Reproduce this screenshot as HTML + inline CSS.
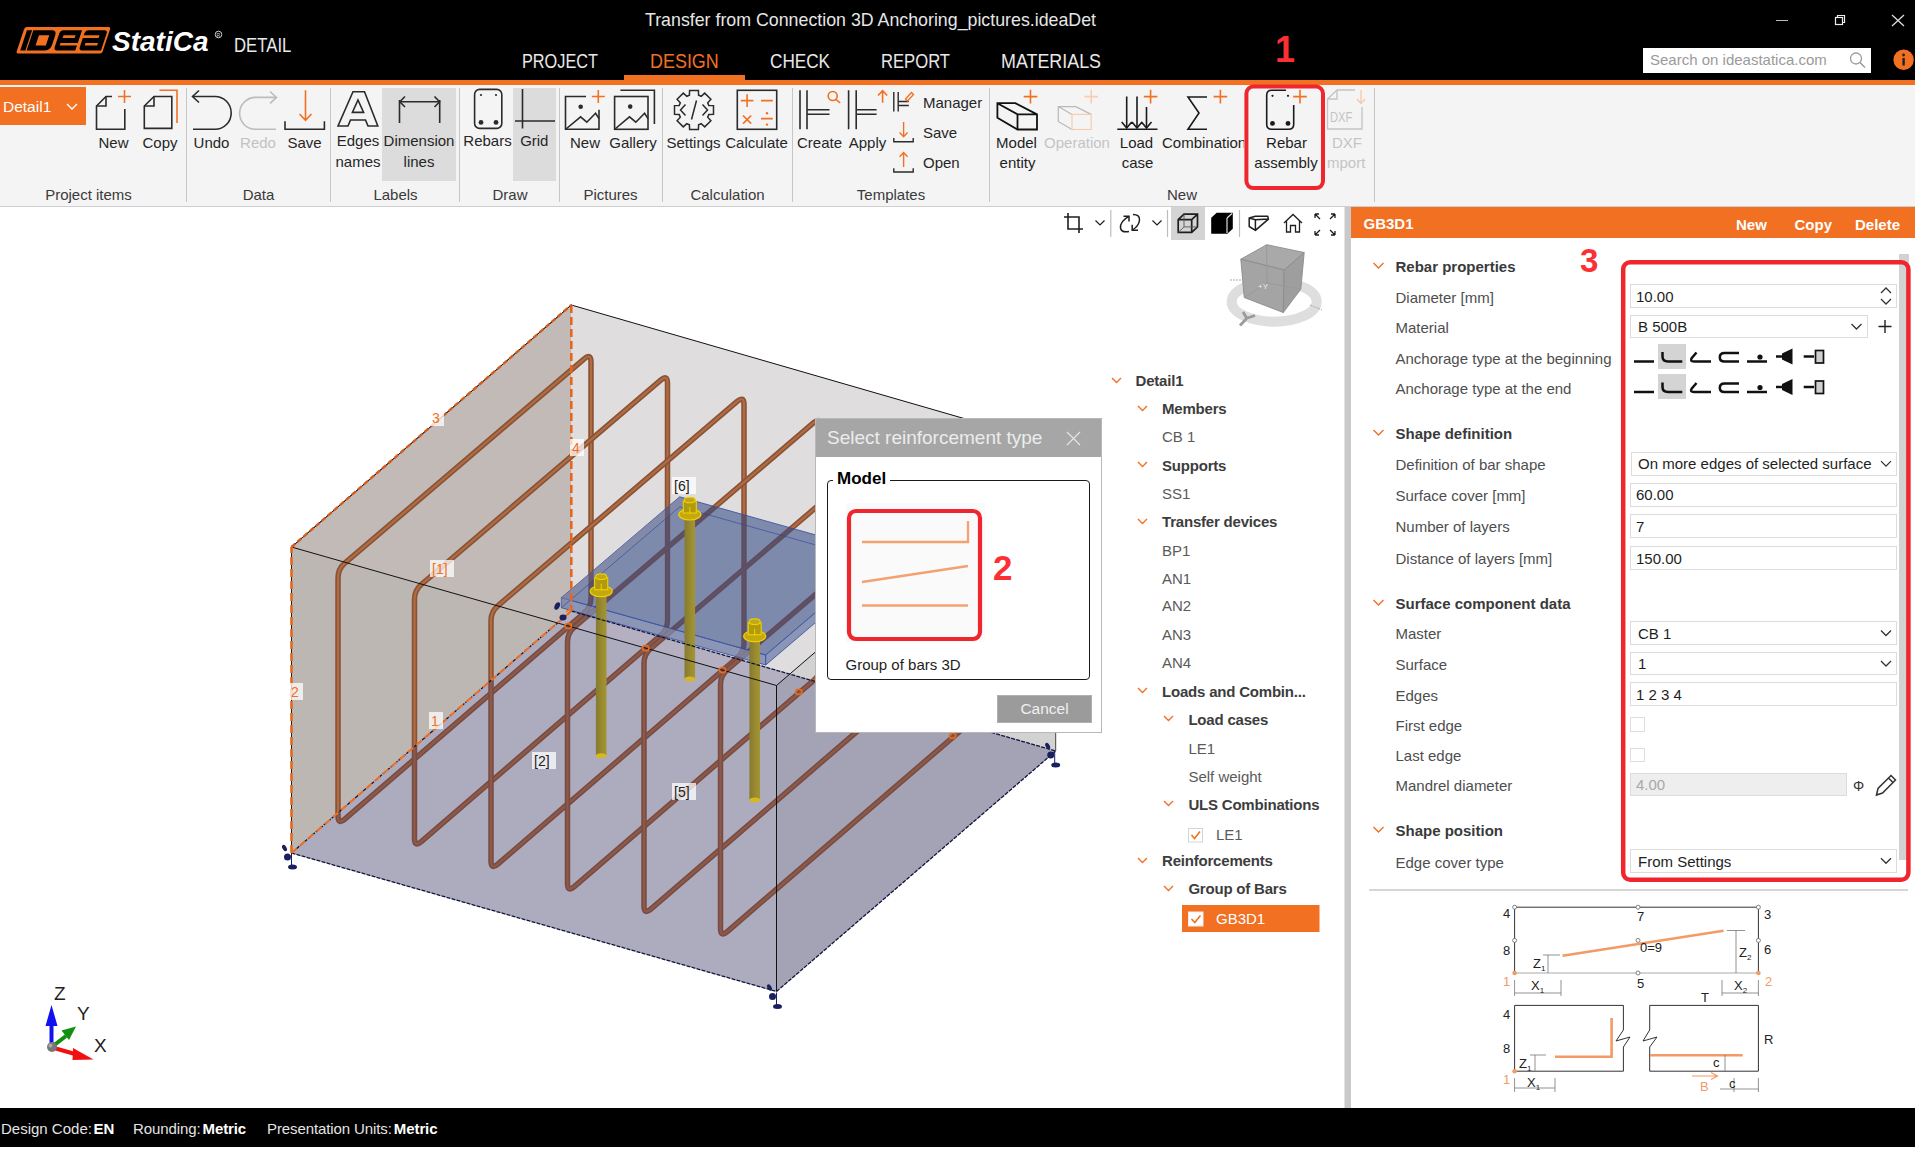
<!DOCTYPE html>
<html><head><meta charset="utf-8">
<style>
*{box-sizing:border-box}
body{margin:0;width:1920px;height:1150px;background:#fff;position:relative;overflow:hidden;font-family:"Liberation Sans",sans-serif;color:#222}
.a{position:absolute;white-space:nowrap}
#hdr{position:absolute;left:0;top:0;width:1915px;height:80px;background:#000}
#oline{position:absolute;left:0;top:80px;width:1915px;height:5px;background:#f27022}
#tb{position:absolute;left:0;top:85px;width:1915px;height:122px;background:#f4f4f4;border-bottom:1px solid #cfcfcf}
#vp{position:absolute;left:0;top:207px;width:1344px;height:901px;background:#fff}
#split{position:absolute;left:1344px;top:207px;width:7px;height:901px;background:#c9c9c9;border-left:1px solid #e4e4e4}
#rp{position:absolute;left:1351px;top:207px;width:564px;height:901px;background:#fff}
#status{position:absolute;left:0;top:1108px;width:1915px;height:39px;background:#000;color:#e6e6e6;font-size:15px}
.tab{position:absolute;top:48px;font-size:20px;color:#e8e8e8;transform-origin:0 0}
.tl{position:absolute;font-size:15px;color:#262626;white-space:nowrap}
.gl{position:absolute;top:104px;font-size:15px;color:#333;white-space:nowrap}
.sep{position:absolute;top:2px;width:1px;height:116px;background:#c8c8c8}
.lbl{position:absolute;left:44px;font-size:15px;color:#4a4a4a;white-space:nowrap}
.sec{position:absolute;left:44px;font-size:15px;font-weight:bold;color:#3c3c3c;white-space:nowrap}
.chev{position:absolute;left:22px;width:11px;height:7px}
.inp{position:absolute;left:279px;width:268px;height:25px;border:1px solid #dcdcdc;background:#fff;font-size:15px;color:#1e1e1e;padding-left:6px;line-height:23px;white-space:nowrap}
.tr{position:absolute;font-size:15px;color:#5a5a5a;white-space:nowrap}
.trb{position:absolute;font-size:15px;font-weight:bold;color:#3d3d3d;white-space:nowrap;letter-spacing:-0.2px}
</style></head>
<body>
<div id="hdr">
  <svg class="a" style="left:0;top:0" width="300" height="80">
    <g transform="translate(16,27) translate(8.8,0) skewX(-18.4)">
      <rect x="0" y="0" width="86" height="26.5" rx="2" fill="#f27022"/>
      <rect x="3.2" y="3.2" width="5.2" height="20.2" fill="#000"/>
      <path d="M9.6,3.2 H28 Q33.2,3.2 33.2,8.5 V18 Q33.2,23.4 28,23.4 H9.6 Z M16.9,8.2 V18.5 H27.2 V8.2 Z" fill="#000" fill-rule="evenodd"/>
      <path d="M40,3.2 H58.3 V23.4 H40 Q36.6,23.4 36.6,20 V6.6 Q36.6,3.2 40,3.2 Z M41.5,8.2 V11.1 H53.5 V8.2 Z" fill="#000" fill-rule="evenodd"/>
      <rect x="41" y="15.9" width="19" height="2.6" fill="#f27022"/>
      <path d="M65,3.2 H80.6 Q84,3.2 84,6.6 V23.4 H65 Q61.7,23.4 61.7,20 V6.6 Q61.7,3.2 65,3.2 Z M66,15.9 V18.5 H78.5 V15.9 Z" fill="#000" fill-rule="evenodd"/>
      <rect x="59" y="8.2" width="18.5" height="2.9" fill="#f27022"/>
    </g>
    <text x="112" y="51" font-family="Liberation Sans" font-weight="bold" font-style="italic" font-size="28" fill="#fff">StatiCa</text>
    <circle cx="218.5" cy="34.5" r="3.3" fill="none" stroke="#ddd" stroke-width="0.9"/>
    <text x="216.6" y="36.5" font-family="Liberation Sans" font-size="5" fill="#ddd">R</text>
    <text x="234" y="52.5" font-family="Liberation Sans" font-size="19.5" fill="#e8e8e8" transform="translate(234,0) scale(0.86,1) translate(-234,0)">DETAIL</text>
  </svg>
  <div class="a" style="left:645px;top:9.5px;font-size:17.8px;color:#e6e6e6">Transfer from Connection 3D Anchoring_pictures.ideaDet</div>
  <div class="tab" style="left:521.5px;top:49.6px;font-size:19.5px;transform:scaleX(0.835)">PROJECT</div>
  <div class="tab" style="left:649.5px;top:49.6px;font-size:19.5px;transform:scaleX(0.92);color:#f27022">DESIGN</div>
  <div class="tab" style="left:770px;top:49.6px;font-size:19.5px;transform:scaleX(0.88)">CHECK</div>
  <div class="tab" style="left:881px;top:49.6px;font-size:19.5px;transform:scaleX(0.853)">REPORT</div>
  <div class="tab" style="left:1001px;top:49.6px;font-size:19.5px;transform:scaleX(0.917)">MATERIALS</div>
  <div class="a" style="left:624px;top:75px;width:121px;height:5px;background:#f27022"></div>
  <div class="a" style="left:1275px;top:32.8px;font-size:36px;line-height:34px;font-weight:bold;color:#fa3034">1</div>
  <svg class="a" style="left:1760px;top:0" width="155" height="80">
    <line x1="16" y1="20.5" x2="28" y2="20.5" stroke="#bbb" stroke-width="1"/>
    <rect x="75.5" y="17.5" width="7" height="7" fill="none" stroke="#eee" stroke-width="1.2"/>
    <path d="M77.5,17.5 V15.5 H84.5 V22.5 H82.5" fill="none" stroke="#eee" stroke-width="1.2"/>
    <path d="M132,15 L144,26 M144,15 L132,26" stroke="#ddd" stroke-width="1.3"/>
  </svg>
  <div class="a" style="left:1643px;top:47.5px;width:228px;height:25.5px;background:#fff"></div>
  <div class="a" style="left:1650px;top:51px;font-size:15px;color:#9a9a9a">Search on ideastatica.com</div>
  <svg class="a" style="left:1845px;top:50px" width="25" height="22">
    <circle cx="11" cy="8.5" r="5.5" fill="none" stroke="#9a9a9a" stroke-width="1.3"/>
    <line x1="15" y1="12.5" x2="20" y2="17.5" stroke="#9a9a9a" stroke-width="1.5"/>
  </svg>
  <svg class="a" style="left:1893px;top:49px" width="22" height="22">
    <circle cx="10.6" cy="10.8" r="10.2" fill="#f27022"/>
    <rect x="9.4" y="9" width="2.4" height="7.5" fill="#222"/>
    <circle cx="10.6" cy="6" r="1.4" fill="#222"/>
  </svg>
</div>
<div id="oline"></div>
<div id="tb"></div>
<div class="a" style="left:382px;top:88px;width:74px;height:93px;background:#dcdcdc"></div>
<div class="a" style="left:513px;top:88px;width:43px;height:93px;background:#dcdcdc"></div>
<div class="a" style="left:0;top:87px;width:85.5px;height:38px;background:#f27022"></div>
<div class="a" style="left:3px;top:98px;font-size:15.5px;color:#fff">Detail1</div>
<svg class="a" style="left:0;top:0" width="1400" height="210">
 <g fill="none" stroke="#2b2b2b" stroke-width="1.6" stroke-linejoin="miter">
  <path d="M67,104 L72,109 L77,104" stroke="#fff" stroke-width="1.3"/>
  <!-- separators -->
  <g stroke="#c6c6c6" stroke-width="1">
   <line x1="186.5" y1="88" x2="186.5" y2="202"/><line x1="330.5" y1="88" x2="330.5" y2="202"/>
   <line x1="459.5" y1="88" x2="459.5" y2="202"/><line x1="559.5" y1="88" x2="559.5" y2="202"/>
   <line x1="662.5" y1="88" x2="662.5" y2="202"/><line x1="792.5" y1="88" x2="792.5" y2="202"/>
   <line x1="989.5" y1="88" x2="989.5" y2="202"/><line x1="1374.5" y1="88" x2="1374.5" y2="202"/>
  </g>
  <!-- New -->
  <path d="M112,96.5 H106 L96.5,106 V129.3 H124.8 V109"/><path d="M106,96.5 V106 H96.5"/>
  <path d="M124.5,90 V103 M118,96.5 H131" stroke="#f27022"/>
  <!-- Copy -->
  <path d="M171.8,96.5 H154 L144.3,106 V128.4 H171.8 Z"/><path d="M154,96.5 V106 H144.3"/>
  <path d="M159.4,90.3 H177 V123" stroke="#f27022"/>
  <!-- Undo -->
  <path d="M193,96.5 H215 A16.2,16.4 0 0 1 215,129.3 H193"/><path d="M199,90.5 L192.5,96.5 L199,102.5"/>
  <!-- Redo -->
  <g stroke="#bcbcbc"><path d="M276,97.4 H254.5 A16.2,16 0 0 0 254.5,129.3 H276"/><path d="M270,91.5 L276.5,97.4 L270,103.3"/></g>
  <!-- Save -->
  <path d="M305.5,90.3 V120 M299.5,114 L305.5,120.3 L311.5,114" stroke="#f27022"/>
  <path d="M285,121.3 V129.3 H324.4 V121.3"/>
  <!-- Edges names A -->
  <path d="M353,91.7 H364.5 L377.8,126 H368 L365.5,120 H350.5 L348,126 H338 Z"/><path d="M358,100 L363.6,112.4 H352.4 Z"/>
  <!-- Dimension lines -->
  <path d="M399.5,100 V123 M439.7,100 V123 M400,101.8 H439"/><path d="M405,96.5 L399.8,101.8 L405,107 M434.5,96.5 L439.6,101.8 L434.5,107"/>
  <!-- Rebars -->
  <rect x="474.6" y="89.4" width="27.2" height="39" rx="5"/>
  <g fill="#2b2b2b" stroke="none"><circle cx="481" cy="95" r="1.1"/><circle cx="496" cy="95" r="1.1"/><circle cx="481" cy="122.4" r="2.4"/><circle cx="496" cy="122.4" r="2.4"/></g>
  <!-- Grid -->
  <path d="M522.5,89 V128.5 M515,121 H555"/>
  <!-- Pictures New -->
  <path d="M586,96.5 H565.5 V129.3 H599 V109.8"/><circle cx="580.7" cy="106.8" r="2.3" fill="#2b2b2b" stroke="none"/>
  <path d="M566,129 L580.6,116.9 L586.8,122.2 L595.6,113.3 L599,118.6"/>
  <path d="M598.3,90 V103 M591.8,96.5 H604.8" stroke="#f27022"/>
  <!-- Gallery -->
  <rect x="614.6" y="96.5" width="33.4" height="32.8"/><path d="M620.4,90.3 H654.4 V124"/><circle cx="630.2" cy="106.6" r="2.3" fill="#2b2b2b" stroke="none"/>
  <path d="M615,129 L629.5,116.9 L635.8,122.2 L644.6,113.3 L648,118.6"/>
  <!-- Settings gear -->
  <path d="M708.8,105.4 L713.5,105.6 L713.5,114.4 L708.8,114.6 L707.7,117.2 L710.9,120.7 L704.7,126.9 L701.2,123.7 L698.6,124.8 L698.4,129.5 L689.6,129.5 L689.4,124.8 L686.8,123.7 L683.3,126.9 L677.1,120.7 L680.3,117.2 L679.2,114.6 L674.5,114.4 L674.5,105.6 L679.2,105.4 L680.3,102.8 L677.1,99.3 L683.3,93.1 L686.8,96.3 L689.4,95.2 L689.6,90.5 L698.4,90.5 L698.6,95.2 L701.2,96.3 L704.7,93.1 L710.9,99.3 L707.7,102.8Z" stroke-width="1.5"/>
  <path d="M685.5,104.5 L680.5,110 L685.5,115.5 M702.5,104.5 L707.5,110 L702.5,115.5 M696.5,100.5 L691.5,119.5" stroke-width="1.5"/>
  <!-- Calculate -->
  <rect x="737.3" y="90.3" width="39.4" height="39"/>
  <g stroke="#f27022"><path d="M747.1,94.3 V107 M740.8,100.6 H753.4 M761,100.6 H772.8 M743,115.5 L751.2,123.6 M751.2,115.5 L743,123.6 M761,118.6 H772.8"/></g>
  <g fill="#f27022" stroke="none"><circle cx="767" cy="113.3" r="1.2"/><circle cx="767" cy="124.6" r="1.2"/></g>
  <!-- Create -->
  <path d="M800,90.3 V129.3 M807,90.3 V129.3 M807,109.8 H829.5 M807,114.2 H829.5"/>
  <g stroke="#f27022"><circle cx="832.7" cy="96" r="4.5"/><path d="M836,99.3 L840.1,103"/></g>
  <!-- Apply -->
  <path d="M848.6,90.3 V129.3 M856.2,90.3 V129.3 M856.2,109.8 H876.6 M856.2,114.2 H876.6"/>
  <path d="M882.6,102.7 V91 M878,95.5 L882.6,90.6 L887.2,95.5" stroke="#f27022"/>
  <!-- Manager small -->
  <path d="M893.8,92 V111.6 M898.2,92 V111.6 M898.2,101.5 H908.8 M898.2,105.5 H908.8" stroke-width="1.4"/>
  <path d="M905.5,99 L911.5,92.5 L913.5,94.5 L907.5,101 Z" stroke="#f27022" stroke-width="1.3"/>
  <!-- Save small -->
  <path d="M903.6,122 V136.5 M899.6,132.5 L903.6,136.8 L907.6,132.5" stroke="#f27022" stroke-width="1.4"/>
  <path d="M893.8,138 V141.7 H913.2 V138" stroke-width="1.4"/>
  <path d="M903.6,167 V152.8 M899.6,156.8 L903.6,152.5 L907.6,156.8" stroke="#f27022" stroke-width="1.4"/>
  <path d="M893.8,168.2 V172 H913.2 V168.2" stroke-width="1.4"/>
  <!-- Model entity -->
  <path d="M997.4,103.2 H1015.3 L1037,114.4 V129.5 H1017.5 L997.4,117.8 Z M997.4,103.2 L1017.5,114.4 H1037 M1017.5,114.4 V129.5" stroke="#111" stroke-width="1.8"/>
  <path d="M1030.5,89.8 V103.4 M1023.7,96.6 H1037.3" stroke="#f27022"/>
  <!-- Operation -->
  <path d="M1072,129.5 L1058.3,121.5 V106.6 H1075.8 L1091.2,114.4 M1058.3,106.6 L1072,114.4" stroke="#b9b9b9" stroke-width="1.2"/>
  <rect x="1072" y="114.4" width="19.2" height="15.1" stroke="#f6cdb0" stroke-width="1.2"/>
  <path d="M1091.2,89.8 V103.4 M1084.4,96.6 H1098" stroke="#f8cdb0"/>
  <!-- Load case -->
  <path d="M1117.3,129.2 H1157.5 M1126.7,96.5 V128 M1137,96.5 V128 M1146.5,107 V128" stroke="#1a1a1a"/>
  <path d="M1121.7,122 L1126.7,128 L1131.7,122 M1132,122 L1137,128 L1142,122 M1141.5,122 L1146.5,128 L1151.5,122" stroke="#1a1a1a"/>
  <path d="M1150.6,89.8 V103.4 M1143.8,96.6 H1157.4" stroke="#f27022"/>
  <!-- Combination -->
  <path d="M1207,97 H1188 L1199,113 L1188,129.2 H1207" stroke="#1a1a1a"/>
  <path d="M1220.4,89.8 V103.4 M1213.6,96.6 H1227.2" stroke="#f27022"/>
  <!-- Rebar assembly -->
  <path d="M1286,90.2 H1271.7 Q1266.7,90.2 1266.7,95.2 V124.2 Q1266.7,129.2 1271.7,129.2 H1288.7 Q1293.7,129.2 1293.7,124.2 V105" stroke="#1a1a1a"/>
  <g fill="#1a1a1a" stroke="none"><circle cx="1272.5" cy="95.8" r="1.1"/><circle cx="1288" cy="95.8" r="1.1"/><circle cx="1272.5" cy="123.4" r="2.4"/><circle cx="1288" cy="123.4" r="2.4"/></g>
  <path d="M1300,89.8 V103.4 M1293.2,96.6 H1306.8" stroke="#f27022"/>
  <!-- DXF -->
  <path d="M1355,90 H1337 L1327.5,99 V129 H1362 V107" stroke="#c4c4c4" stroke-width="1.3"/>
  <path d="M1337,90 V99 H1327.5" stroke="#c4c4c4" stroke-width="1.3"/>
  <path d="M1361,90 V103 M1357,99 L1361,103.5 L1365,99" stroke="#f6c8a8" stroke-width="1.3"/>
  <!-- red box 1 -->
  <rect x="1246.4" y="86.5" width="76.6" height="101.6" rx="7" stroke="#f0262e" stroke-width="4"/>
 </g>
 <text x="1330" y="122" font-family="Liberation Sans" font-size="14" fill="#c4c4c4" transform="translate(1330,0) scale(0.8,1) translate(-1330,0)">DXF</text>
</svg>
<div class="tl" style="left:53.5px;top:134.0px;width:120px;text-align:center;line-height:18px;color:#262626">New</div>
<div class="tl" style="left:100.0px;top:134.0px;width:120px;text-align:center;line-height:18px;color:#262626">Copy</div>
<div class="tl" style="left:151.5px;top:134.0px;width:120px;text-align:center;line-height:18px;color:#262626">Undo</div>
<div class="tl" style="left:198.0px;top:134.0px;width:120px;text-align:center;line-height:18px;color:#c2c2c2">Redo</div>
<div class="tl" style="left:244.5px;top:134.0px;width:120px;text-align:center;line-height:18px;color:#262626">Save</div>
<div class="tl" style="left:298.0px;top:132.4px;width:120px;text-align:center;line-height:18px;color:#262626">Edges</div>
<div class="tl" style="left:298.0px;top:152.8px;width:120px;text-align:center;line-height:18px;color:#262626">names</div>
<div class="tl" style="left:359.0px;top:132.4px;width:120px;text-align:center;line-height:18px;color:#262626">Dimension</div>
<div class="tl" style="left:359.0px;top:152.8px;width:120px;text-align:center;line-height:18px;color:#262626">lines</div>
<div class="tl" style="left:427.5px;top:132.4px;width:120px;text-align:center;line-height:18px;color:#262626">Rebars</div>
<div class="tl" style="left:474.3px;top:132.4px;width:120px;text-align:center;line-height:18px;color:#262626">Grid</div>
<div class="tl" style="left:525.0px;top:134.0px;width:120px;text-align:center;line-height:18px;color:#262626">New</div>
<div class="tl" style="left:573.0px;top:134.0px;width:120px;text-align:center;line-height:18px;color:#262626">Gallery</div>
<div class="tl" style="left:633.5px;top:134.0px;width:120px;text-align:center;line-height:18px;color:#262626">Settings</div>
<div class="tl" style="left:696.5px;top:134.0px;width:120px;text-align:center;line-height:18px;color:#262626">Calculate</div>
<div class="tl" style="left:759.5px;top:134.0px;width:120px;text-align:center;line-height:18px;color:#262626">Create</div>
<div class="tl" style="left:807.5px;top:134.0px;width:120px;text-align:center;line-height:18px;color:#262626">Apply</div>
<div class="tl" style="left:956.5px;top:134.0px;width:120px;text-align:center;line-height:18px;color:#1e1e1e">Model</div>
<div class="tl" style="left:957.5px;top:154.4px;width:120px;text-align:center;line-height:18px;color:#1e1e1e">entity</div>
<div class="tl" style="left:1017.0px;top:134.0px;width:120px;text-align:center;line-height:18px;color:#c4c4c4">Operation</div>
<div class="tl" style="left:1076.5px;top:134.0px;width:120px;text-align:center;line-height:18px;color:#1e1e1e">Load</div>
<div class="tl" style="left:1077.5px;top:154.4px;width:120px;text-align:center;line-height:18px;color:#1e1e1e">case</div>
<div class="tl" style="left:1226.5px;top:134.0px;width:120px;text-align:center;line-height:18px;color:#1e1e1e">Rebar</div>
<div class="tl" style="left:1226.0px;top:154.4px;width:120px;text-align:center;line-height:18px;color:#1e1e1e">assembly</div>
<div class="tl" style="left:1287.0px;top:134.0px;width:120px;text-align:center;line-height:18px;color:#c4c4c4">DXF</div>
<div class="tl" style="left:28.5px;top:186.2px;width:120px;text-align:center;line-height:18px;color:#3a3a3a">Project items</div>
<div class="tl" style="left:198.5px;top:186.2px;width:120px;text-align:center;line-height:18px;color:#3a3a3a">Data</div>
<div class="tl" style="left:335.5px;top:186.2px;width:120px;text-align:center;line-height:18px;color:#3a3a3a">Labels</div>
<div class="tl" style="left:450.0px;top:186.2px;width:120px;text-align:center;line-height:18px;color:#3a3a3a">Draw</div>
<div class="tl" style="left:550.5px;top:186.2px;width:120px;text-align:center;line-height:18px;color:#3a3a3a">Pictures</div>
<div class="tl" style="left:667.5px;top:186.2px;width:120px;text-align:center;line-height:18px;color:#3a3a3a">Calculation</div>
<div class="tl" style="left:831.0px;top:186.2px;width:120px;text-align:center;line-height:18px;color:#3a3a3a">Templates</div>
<div class="tl" style="left:1122.0px;top:186.2px;width:120px;text-align:center;line-height:18px;color:#3a3a3a">New</div>
<div class="tl" style="left:923px;top:93.8px;line-height:18px">Manager</div>
<div class="tl" style="left:923px;top:124.0px;line-height:18px">Save</div>
<div class="tl" style="left:923px;top:154.0px;line-height:18px">Open</div>
<div class="a" style="left:1162px;top:134.0px;width:82px;overflow:hidden;font-size:15px;line-height:18px;color:#1e1e1e">Combination</div>
<div class="a" style="left:1327px;top:154.4px;width:48px;overflow:hidden;font-size:15px;line-height:18px;color:#c4c4c4">mport</div>
<div id="vp"></div>
<svg class="a" style="left:0;top:207px" width="1344" height="901" viewBox="0 207 1344 901">
<polygon points="571.3,611.0 571.3,305.0 1055.7,445.0 1055.7,751.0" fill="#dedede"/>
<polygon points="291.5,853.0 291.5,547.0 571.3,305.0 571.3,611.0" fill="#bcb7b3"/>
<polygon points="291.5,853.0 776.5,991.5 1055.7,751.0 571.3,611.0" fill="#adacbf"/>
<polygon points="291.5,547.0 776.5,685.5 776.5,991.5 291.5,853.0" fill="#b0aec8" fill-opacity="0.0"/>
<polygon points="776.5,991.5 776.5,685.5 1055.7,445.0 1055.7,751.0" fill="#000" fill-opacity="0.05"/>
<polygon points="291.5,547 571.3,305 1055.7,445 776.5,685.5" fill="#fad7e1" fill-opacity="0.1"/>
<defs><clipPath id="cl"><polygon points="291.5,853.0 776.5,991.5 1055.7,751.0 571.3,611.0"/></clipPath><clipPath id="cu"><polygon points="0,207 1344,207 1344,740 1055.7,751.0 571.3,611.0 291.5,853.0 0,853"/></clipPath></defs>
<g clip-path="url(#cu)">
<path d="M338.0,578.0 Q338.0,569.0 344.8,563.2 L584.2,358.8 Q591.0,353.0 591.0,362.0 L591.0,598.0 Q591.0,607.0 584.2,612.9 L344.8,819.1 Q338.0,825.0 338.0,816.0 Z" fill="none" stroke="#8a5236" stroke-width="5.5"/>
<path d="M338.0,578.0 Q338.0,569.0 344.8,563.2 L584.2,358.8 Q591.0,353.0 591.0,362.0 L591.0,598.0 Q591.0,607.0 584.2,612.9 L344.8,819.1 Q338.0,825.0 338.0,816.0 Z" fill="none" stroke="#b06c42" stroke-width="2.2"/>
<path d="M414.5,599.3 Q414.5,590.3 421.3,584.5 L660.7,380.1 Q667.5,374.3 667.5,383.3 L667.5,620.5 Q667.5,629.5 660.7,635.4 L421.3,841.6 Q414.5,847.5 414.5,838.5 Z" fill="none" stroke="#8a5236" stroke-width="5.5"/>
<path d="M414.5,599.3 Q414.5,590.3 421.3,584.5 L660.7,380.1 Q667.5,374.3 667.5,383.3 L667.5,620.5 Q667.5,629.5 660.7,635.4 L421.3,841.6 Q414.5,847.5 414.5,838.5 Z" fill="none" stroke="#b06c42" stroke-width="2.2"/>
<path d="M491.0,620.6 Q491.0,611.6 497.8,605.8 L737.2,401.4 Q744.0,395.6 744.0,404.6 L744.0,643.0 Q744.0,652.0 737.2,657.9 L497.8,864.1 Q491.0,870.0 491.0,861.0 Z" fill="none" stroke="#8a5236" stroke-width="5.5"/>
<path d="M491.0,620.6 Q491.0,611.6 497.8,605.8 L737.2,401.4 Q744.0,395.6 744.0,404.6 L744.0,643.0 Q744.0,652.0 737.2,657.9 L497.8,864.1 Q491.0,870.0 491.0,861.0 Z" fill="none" stroke="#b06c42" stroke-width="2.2"/>
<path d="M567.5,641.9 Q567.5,632.9 574.3,627.1 L813.7,422.7 Q820.5,416.9 820.5,425.9 L820.5,665.5 Q820.5,674.5 813.7,680.4 L574.3,886.6 Q567.5,892.5 567.5,883.5 Z" fill="none" stroke="#8a5236" stroke-width="5.5"/>
<path d="M567.5,641.9 Q567.5,632.9 574.3,627.1 L813.7,422.7 Q820.5,416.9 820.5,425.9 L820.5,665.5 Q820.5,674.5 813.7,680.4 L574.3,886.6 Q567.5,892.5 567.5,883.5 Z" fill="none" stroke="#b06c42" stroke-width="2.2"/>
<path d="M644.0,663.2 Q644.0,654.2 650.8,648.4 L890.2,444.0 Q897.0,438.2 897.0,447.2 L897.0,688.0 Q897.0,697.0 890.2,702.9 L650.8,909.1 Q644.0,915.0 644.0,906.0 Z" fill="none" stroke="#8a5236" stroke-width="5.5"/>
<path d="M644.0,663.2 Q644.0,654.2 650.8,648.4 L890.2,444.0 Q897.0,438.2 897.0,447.2 L897.0,688.0 Q897.0,697.0 890.2,702.9 L650.8,909.1 Q644.0,915.0 644.0,906.0 Z" fill="none" stroke="#b06c42" stroke-width="2.2"/>
<path d="M720.5,684.5 Q720.5,675.5 727.3,669.7 L966.7,465.3 Q973.5,459.5 973.5,468.5 L973.5,710.5 Q973.5,719.5 966.7,725.4 L727.3,931.6 Q720.5,937.5 720.5,928.5 Z" fill="none" stroke="#8a5236" stroke-width="5.5"/>
<path d="M720.5,684.5 Q720.5,675.5 727.3,669.7 L966.7,465.3 Q973.5,459.5 973.5,468.5 L973.5,710.5 Q973.5,719.5 966.7,725.4 L727.3,931.6 Q720.5,937.5 720.5,928.5 Z" fill="none" stroke="#b06c42" stroke-width="2.2"/>
</g><g clip-path="url(#cl)">
<path d="M338.0,578.0 Q338.0,569.0 344.8,563.2 L584.2,358.8 Q591.0,353.0 591.0,362.0 L591.0,598.0 Q591.0,607.0 584.2,612.9 L344.8,819.1 Q338.0,825.0 338.0,816.0 Z" fill="none" stroke="#784c44" stroke-width="5.5"/>
<path d="M338.0,578.0 Q338.0,569.0 344.8,563.2 L584.2,358.8 Q591.0,353.0 591.0,362.0 L591.0,598.0 Q591.0,607.0 584.2,612.9 L344.8,819.1 Q338.0,825.0 338.0,816.0 Z" fill="none" stroke="#8e5a48" stroke-width="2.2"/>
<path d="M414.5,599.3 Q414.5,590.3 421.3,584.5 L660.7,380.1 Q667.5,374.3 667.5,383.3 L667.5,620.5 Q667.5,629.5 660.7,635.4 L421.3,841.6 Q414.5,847.5 414.5,838.5 Z" fill="none" stroke="#784c44" stroke-width="5.5"/>
<path d="M414.5,599.3 Q414.5,590.3 421.3,584.5 L660.7,380.1 Q667.5,374.3 667.5,383.3 L667.5,620.5 Q667.5,629.5 660.7,635.4 L421.3,841.6 Q414.5,847.5 414.5,838.5 Z" fill="none" stroke="#8e5a48" stroke-width="2.2"/>
<path d="M491.0,620.6 Q491.0,611.6 497.8,605.8 L737.2,401.4 Q744.0,395.6 744.0,404.6 L744.0,643.0 Q744.0,652.0 737.2,657.9 L497.8,864.1 Q491.0,870.0 491.0,861.0 Z" fill="none" stroke="#784c44" stroke-width="5.5"/>
<path d="M491.0,620.6 Q491.0,611.6 497.8,605.8 L737.2,401.4 Q744.0,395.6 744.0,404.6 L744.0,643.0 Q744.0,652.0 737.2,657.9 L497.8,864.1 Q491.0,870.0 491.0,861.0 Z" fill="none" stroke="#8e5a48" stroke-width="2.2"/>
<path d="M567.5,641.9 Q567.5,632.9 574.3,627.1 L813.7,422.7 Q820.5,416.9 820.5,425.9 L820.5,665.5 Q820.5,674.5 813.7,680.4 L574.3,886.6 Q567.5,892.5 567.5,883.5 Z" fill="none" stroke="#784c44" stroke-width="5.5"/>
<path d="M567.5,641.9 Q567.5,632.9 574.3,627.1 L813.7,422.7 Q820.5,416.9 820.5,425.9 L820.5,665.5 Q820.5,674.5 813.7,680.4 L574.3,886.6 Q567.5,892.5 567.5,883.5 Z" fill="none" stroke="#8e5a48" stroke-width="2.2"/>
<path d="M644.0,663.2 Q644.0,654.2 650.8,648.4 L890.2,444.0 Q897.0,438.2 897.0,447.2 L897.0,688.0 Q897.0,697.0 890.2,702.9 L650.8,909.1 Q644.0,915.0 644.0,906.0 Z" fill="none" stroke="#784c44" stroke-width="5.5"/>
<path d="M644.0,663.2 Q644.0,654.2 650.8,648.4 L890.2,444.0 Q897.0,438.2 897.0,447.2 L897.0,688.0 Q897.0,697.0 890.2,702.9 L650.8,909.1 Q644.0,915.0 644.0,906.0 Z" fill="none" stroke="#8e5a48" stroke-width="2.2"/>
<path d="M720.5,684.5 Q720.5,675.5 727.3,669.7 L966.7,465.3 Q973.5,459.5 973.5,468.5 L973.5,710.5 Q973.5,719.5 966.7,725.4 L727.3,931.6 Q720.5,937.5 720.5,928.5 Z" fill="none" stroke="#784c44" stroke-width="5.5"/>
<path d="M720.5,684.5 Q720.5,675.5 727.3,669.7 L966.7,465.3 Q973.5,459.5 973.5,468.5 L973.5,710.5 Q973.5,719.5 966.7,725.4 L727.3,931.6 Q720.5,937.5 720.5,928.5 Z" fill="none" stroke="#8e5a48" stroke-width="2.2"/>
</g>
<polygon points="561.4,597.7 765.7,655.0 765.7,665.0 561.4,607.7" fill="#7683aa" fill-opacity="0.8" stroke="#3d55a5" stroke-width="0.9"/>
<polygon points="561.4,597.7 679.7,496.8 884.0,554.1 765.7,655.0" fill="#5f6d9a" fill-opacity="0.75" stroke="#3d55a5" stroke-width="0.9"/>
<polygon points="561.4,597.7 679.7,496.8 679.7,506.8 561.4,607.7" fill="#8a8ca6" fill-opacity="0.5"/><path d="M561.4,607.7 L679.7,506.8 L884,564.1" fill="none" stroke="#3d55a5" stroke-width="0.8"/>
<defs><clipPath id="cp"><polygon points="561.4,597.7 679.7,496.8 884.0,554.1 765.7,655.0"/></clipPath></defs><g clip-path="url(#cp)" opacity="0.45">
<path d="M338.0,578.0 Q338.0,569.0 344.8,563.2 L584.2,358.8 Q591.0,353.0 591.0,362.0 L591.0,598.0 Q591.0,607.0 584.2,612.9 L344.8,819.1 Q338.0,825.0 338.0,816.0 Z" fill="none" stroke="#4a3040" stroke-width="5"/>
<path d="M414.5,599.3 Q414.5,590.3 421.3,584.5 L660.7,380.1 Q667.5,374.3 667.5,383.3 L667.5,620.5 Q667.5,629.5 660.7,635.4 L421.3,841.6 Q414.5,847.5 414.5,838.5 Z" fill="none" stroke="#4a3040" stroke-width="5"/>
<path d="M491.0,620.6 Q491.0,611.6 497.8,605.8 L737.2,401.4 Q744.0,395.6 744.0,404.6 L744.0,643.0 Q744.0,652.0 737.2,657.9 L497.8,864.1 Q491.0,870.0 491.0,861.0 Z" fill="none" stroke="#4a3040" stroke-width="5"/>
<path d="M567.5,641.9 Q567.5,632.9 574.3,627.1 L813.7,422.7 Q820.5,416.9 820.5,425.9 L820.5,665.5 Q820.5,674.5 813.7,680.4 L574.3,886.6 Q567.5,892.5 567.5,883.5 Z" fill="none" stroke="#4a3040" stroke-width="5"/>
<path d="M644.0,663.2 Q644.0,654.2 650.8,648.4 L890.2,444.0 Q897.0,438.2 897.0,447.2 L897.0,688.0 Q897.0,697.0 890.2,702.9 L650.8,909.1 Q644.0,915.0 644.0,906.0 Z" fill="none" stroke="#4a3040" stroke-width="5"/>
<path d="M720.5,684.5 Q720.5,675.5 727.3,669.7 L966.7,465.3 Q973.5,459.5 973.5,468.5 L973.5,710.5 Q973.5,719.5 966.7,725.4 L727.3,931.6 Q720.5,937.5 720.5,928.5 Z" fill="none" stroke="#4a3040" stroke-width="5"/>
</g>
<polygon points="765.7,655.0 884.0,554.1 884.0,564.1 765.7,665.0" fill="#7683aa" fill-opacity="0.8" stroke="#3d55a5" stroke-width="0.9"/>
<defs><linearGradient id="rodg" x1="0" x2="1" y1="0" y2="0"><stop offset="0" stop-color="#857a30"/><stop offset="0.6" stop-color="#9a8c30"/><stop offset="1" stop-color="#a49432"/></linearGradient></defs>
<rect x="595.9" y="592.7" width="10.6" height="163.0" fill="url(#rodg)"/>
<ellipse cx="601.2" cy="755.7" rx="5.5" ry="2.5" fill="#d8b820"/>
<ellipse cx="601.2" cy="591.2" rx="11" ry="5.5" fill="#c4a810" stroke="#f0d000" stroke-width="1.2"/>
<rect x="594.7" y="577.7" width="13" height="12" fill="#b09a10" stroke="#f0d000" stroke-width="1.1"/>
<line x1="601.2" y1="583.7" x2="601.2" y2="590.7" stroke="#f0d000" stroke-width="1"/>
<ellipse cx="601.2" cy="576.7" rx="5.5" ry="2.8" fill="#c0a818" stroke="#f0d000" stroke-width="1.1"/>
<rect x="684.5" y="516.0" width="10.6" height="163.0" fill="url(#rodg)"/>
<ellipse cx="689.8" cy="679" rx="5.5" ry="2.5" fill="#d8b820"/>
<ellipse cx="689.8" cy="514.5" rx="11" ry="5.5" fill="#c4a810" stroke="#f0d000" stroke-width="1.2"/>
<rect x="683.3" y="501.0" width="13" height="12" fill="#b09a10" stroke="#f0d000" stroke-width="1.1"/>
<line x1="689.8" y1="507" x2="689.8" y2="514" stroke="#f0d000" stroke-width="1"/>
<ellipse cx="689.8" cy="500.0" rx="5.5" ry="2.8" fill="#c0a818" stroke="#f0d000" stroke-width="1.1"/>
<rect x="749.4" y="637.7" width="10.6" height="162.3" fill="url(#rodg)"/>
<ellipse cx="754.7" cy="800" rx="5.5" ry="2.5" fill="#d8b820"/>
<ellipse cx="754.7" cy="636.2" rx="11" ry="5.5" fill="#c4a810" stroke="#f0d000" stroke-width="1.2"/>
<rect x="748.2" y="622.7" width="13" height="12" fill="#b09a10" stroke="#f0d000" stroke-width="1.1"/>
<line x1="754.7" y1="628.7" x2="754.7" y2="635.7" stroke="#f0d000" stroke-width="1"/>
<ellipse cx="754.7" cy="621.7" rx="5.5" ry="2.8" fill="#c0a818" stroke="#f0d000" stroke-width="1.1"/>
<g fill="none" stroke-width="1">
<path d="M291.5,547.0 L571.3,305.0 L1055.7,445.0 M291.5,547.0 L776.5,685.5 L776.5,991.5 M776.5,685.5 L1055.7,445.0" stroke="#111"/>
<path d="M291.5,853.0 L776.5,991.5 L1055.7,751.0 L571.3,611.0 Z" stroke="#10143a" stroke-width="1.3" stroke-dasharray="4,1.2"/>
<path d="M1055.7,751.0 L1055.7,445.0" stroke="#444"/>
<path d="M291.5,853.0 L291.5,547.0 L571.3,305.0" stroke="#222" stroke-width="1"/><path d="M291.5,853.0 L291.5,547.0 M571.3,305.0 L571.3,611.0" stroke="#e8661c" stroke-width="2.6" stroke-dasharray="8,4"/><path d="M291.5,547.0 L571.3,305.0" stroke="#d85a18" stroke-width="2.4" stroke-dasharray="5,3"/><path d="M291.5,853.0 L571.3,611.0" stroke="#f27022" stroke-width="2" stroke-dasharray="7,4"/>
</g>
<g fill="#1a1f60"><ellipse cx="284.5" cy="848" rx="2" ry="3.5" transform="rotate(-30 284.5 848)"/><circle cx="287.5" cy="857" r="3.5"/><ellipse cx="292.5" cy="867" rx="4.5" ry="2.5"/></g>
<path d="M291.5,853 V867" stroke="#1a1f60" stroke-width="1"/>
<g fill="#1a1f60"><ellipse cx="769.5" cy="987.5" rx="2" ry="3.5" transform="rotate(-30 769.5 987.5)"/><circle cx="772.5" cy="996.5" r="3.5"/><ellipse cx="777.5" cy="1006.5" rx="4.5" ry="2.5"/></g>
<path d="M776.5,992.5 V1006.5" stroke="#1a1f60" stroke-width="1"/>
<g fill="#1a1f60"><ellipse cx="1047.7" cy="746" rx="2" ry="3.5" transform="rotate(-30 1047.7 746)"/><circle cx="1050.7" cy="755" r="3.5"/><ellipse cx="1055.7" cy="765" rx="4.5" ry="2.5"/></g>
<path d="M1054.7,751 V765" stroke="#1a1f60" stroke-width="1"/>
<g fill="#1a1f60"><ellipse cx="557.2" cy="606" rx="2.5" ry="4" transform="rotate(25 557.2 606)"/><ellipse cx="563" cy="617.5" rx="3.5" ry="3"/></g><path d="M566,612 L571,608" stroke="#f27022" stroke-width="1.5"/>
<ellipse cx="568.2" cy="626.0" rx="3.2" ry="2.6" fill="none" stroke="#e86a20" stroke-width="1.6"/><ellipse cx="645.7" cy="648.2" rx="3.2" ry="2.6" fill="none" stroke="#e86a20" stroke-width="1.6"/><ellipse cx="722.5" cy="670.1" rx="3.2" ry="2.6" fill="none" stroke="#e86a20" stroke-width="1.6"/><ellipse cx="798.8" cy="691.9" rx="3.2" ry="2.6" fill="none" stroke="#e86a20" stroke-width="1.6"/><ellipse cx="952.6" cy="735.8" rx="3.2" ry="2.6" fill="none" stroke="#e86a20" stroke-width="1.6"/>
<rect x="430" y="409" width="14" height="17" fill="#fff" fill-opacity="0.75"/>
<text x="432" y="422.5" font-family="Liberation Sans" font-size="14" fill="#f27022">3</text>
<rect x="570" y="439" width="14" height="17" fill="#fff" fill-opacity="0.75"/>
<text x="572" y="452.5" font-family="Liberation Sans" font-size="14" fill="#f27022">4</text>
<rect x="430" y="560" width="24" height="17" fill="#fff" fill-opacity="0.75"/>
<text x="432" y="573.5" font-family="Liberation Sans" font-size="14" fill="#f27022">[1]</text>
<rect x="289" y="683" width="14" height="17" fill="#fff" fill-opacity="0.75"/>
<text x="291" y="696.5" font-family="Liberation Sans" font-size="14" fill="#f27022">2</text>
<rect x="429" y="712" width="14" height="17" fill="#fff" fill-opacity="0.75"/>
<text x="431" y="725.5" font-family="Liberation Sans" font-size="14" fill="#f27022">1</text>
<rect x="672" y="477" width="24" height="17" fill="#fff" fill-opacity="0.75"/>
<text x="674" y="490.5" font-family="Liberation Sans" font-size="14" fill="#222">[6]</text>
<rect x="532" y="752" width="24" height="17" fill="#fff" fill-opacity="0.75"/>
<text x="534" y="765.5" font-family="Liberation Sans" font-size="14" fill="#222">[2]</text>
<rect x="672" y="783" width="24" height="17" fill="#fff" fill-opacity="0.75"/>
<text x="674" y="796.5" font-family="Liberation Sans" font-size="14" fill="#222">[5]</text>
</svg>
<div class="a" style="left:1170.8px;top:207px;width:34px;height:33px;background:#d4d4d4"></div>
<svg class="a" style="left:1050px;top:205px" width="294" height="40"><g fill="none" stroke="#1e1e1e" stroke-width="1.6">
<path d="M18,8 V24 H33 M14,12 H29 V28"/>
<path d="M45.5,15.5 L50,20 L54.5,15.5" stroke-width="1.2"/>
<line x1="60.8" y1="5" x2="60.8" y2="32" stroke="#bdbdbd" stroke-width="1.2"/>
<path d="M79,11.3 Q70,16 70.5,23 Q71.5,28 79,26.5" stroke-width="1.5"/><path d="M73.5,11.2 H79 V16.4" stroke-width="1.5"/><path d="M83,9.5 Q90,9.5 89.5,15 Q89,21 82.2,25.2" stroke-width="1.5"/><path d="M88,25.2 H82.2 V19.7" stroke-width="1.5"/>
<path d="M102.5,15.5 L107,20 L111.5,15.5" stroke-width="1.2"/>
<line x1="117.5" y1="5" x2="117.5" y2="32" stroke="#bdbdbd" stroke-width="1.2"/>
<path d="M128.2,14.6 L134,9.1 H147.5 V21.9 L141.7,27.4 H128.2 Z M128.2,14.6 H141.7 V27.4 M141.7,14.6 L147.5,9.1" stroke-width="1.7"/><path d="M134,9.1 V21.9 H147.5 M134,21.9 L128.2,27.4" stroke-width="0.9" stroke="#555"/>
<path d="M162,13 L167,8.5 H182 V23.5 L177,28 H162 Z" fill="#000" stroke="#000"/>
<path d="M177,13 V28 M177,13 L182,8.5" stroke="#ddd" stroke-width="1.2"/>
<line x1="189.5" y1="5" x2="189.5" y2="32" stroke="#bdbdbd" stroke-width="1.2"/>
<path d="M199.2,13 L205.4,11.3 H217.8 L218.4,14.1 L205.4,25.4 L199.2,21.5 Z M199.2,13 L205.4,14.7 L218.4,14.1 M205.4,14.7 V25.4" stroke-width="1.5" stroke-linejoin="round"/>
<path d="M234,18 L243,9.5 L252,18 M236.5,16 V27 H240.5 V20.5 H245.5 V27 H249.5 V16" stroke-width="1.3"/>
<path d="M265,9 L270,14 M265,9 H269 M265,9 V13 M285,9 L280,14 M285,9 H281 M285,9 V13 M265,30 L270,25 M265,30 H269 M265,30 V26 M285,30 L280,25 M285,30 H281 M285,30 V26" stroke-width="1.3"/>
</g></svg>
<svg class="a" style="left:1215px;top:238px" width="120" height="100" viewBox="1215 238 120 100">
<ellipse cx="1274.2" cy="301.7" rx="42.5" ry="20" fill="none" stroke="#dedede" stroke-width="10"/>
<g stroke="#8c8c8c" stroke-width="0.9">
<polygon points="1266.7,244.7 1304.2,252.5 1284.2,270 1240.8,259.2" fill="#a9a9a9"/>
<polygon points="1240.8,259.2 1284.2,270 1283.3,312.5 1244.2,297.5" fill="#a4a4a4"/>
<polygon points="1284.2,270 1304.2,252.5 1300.8,289.2 1283.3,312.5" fill="#9e9e9e"/>
<path d="M1266.7,244.7 L1267,283 L1244.2,297.5 M1267,283 L1300.8,289.2" fill="none" stroke="#999"/>
</g>
<path d="M1243,312 L1246.8,318.3 L1240,325.5 M1246.8,318.3 L1255,315.5" stroke="#9a9a9a" stroke-width="2.8" fill="none"/><text x="1258" y="289" font-family="Liberation Sans" font-size="8" fill="#eee">+Y</text>
<path d="M1230,280 H1242 M1310,305 L1322,310" stroke="#aaa" stroke-width="1" stroke-dasharray="2,1"/>
</svg>
<svg class="a" style="left:30px;top:980px" width="90" height="90" viewBox="30 980 90 90">
<path d="M51.5,1045 V1024" stroke="#1010f0" stroke-width="4"/><path d="M45.5,1026 L51.5,1005 L57.5,1026 Z" fill="#1010f0"/>
<path d="M53,1046 L66,1036" stroke="#109010" stroke-width="4"/><path d="M61.5,1030.5 L76,1026.5 L69,1040 Z" fill="#109010"/>
<path d="M54,1048 L75,1054" stroke="#f01010" stroke-width="4"/><path d="M73,1048 L93.5,1059.5 L72.5,1060 Z" fill="#f01010"/>
<circle cx="52" cy="1047" r="5" fill="#777"/><circle cx="50.5" cy="1045.5" r="2" fill="#aaa"/>
<text x="54" y="1000" font-family="Liberation Sans" font-size="19" fill="#222">Z</text>
<text x="77" y="1020" font-family="Liberation Sans" font-size="19" fill="#222">Y</text>
<text x="94" y="1052" font-family="Liberation Sans" font-size="19" fill="#222">X</text>
</svg>
<svg class="a" style="left:1100px;top:360px" width="240" height="590">
 <g fill="none" stroke="#f27022" stroke-width="1.4">
  <path d="M12,18 L16.5,22.5 L21,18"/>
  <path d="M38,46 L42.5,50.5 L47,46"/>
  <path d="M38,102 L42.5,106.5 L47,102"/>
  <path d="M38,159 L42.5,163.5 L47,159"/>
  <path d="M38,328 L42.5,332.5 L47,328"/>
  <path d="M64,356 L68.5,360.5 L73,356"/>
  <path d="M64,441 L68.5,445.5 L73,441"/>
  <path d="M38,498 L42.5,502.5 L47,498"/>
  <path d="M64,526 L68.5,530.5 L73,526"/>
 </g>
 <rect x="88.5" y="468.5" width="14" height="13.5" fill="#fff" stroke="#d4d4d4"/>
 <path d="M91.5,475 L94.5,478.5 L100,471.5" fill="none" stroke="#f27022" stroke-width="1.6"/>
 <rect x="82" y="545" width="137.5" height="27" fill="#f27022"/>
 <rect x="88.5" y="552" width="14.5" height="14" fill="#fff" stroke="#eee"/>
 <path d="M91.5,559 L94.8,562.5 L100.5,555.5" fill="none" stroke="#f27022" stroke-width="1.6"/>
</svg>
<div class="trb" style="left:1135.5px;top:371.8px;line-height:18px">Detail1</div>
<div class="trb" style="left:1162px;top:400.1px;line-height:18px">Members</div>
<div class="tr" style="left:1162px;top:428.2px;line-height:18px">CB 1</div>
<div class="trb" style="left:1162px;top:456.5px;line-height:18px">Supports</div>
<div class="tr" style="left:1162px;top:484.8px;line-height:18px">SS1</div>
<div class="trb" style="left:1162px;top:513.4px;line-height:18px">Transfer devices</div>
<div class="tr" style="left:1162px;top:541.5px;line-height:18px">BP1</div>
<div class="tr" style="left:1162px;top:569.7px;line-height:18px">AN1</div>
<div class="tr" style="left:1162px;top:597.1px;line-height:18px">AN2</div>
<div class="tr" style="left:1162px;top:625.7px;line-height:18px">AN3</div>
<div class="tr" style="left:1162px;top:654.3px;line-height:18px">AN4</div>
<div class="trb" style="left:1162px;top:683.0px;line-height:18px">Loads and Combin...</div>
<div class="trb" style="left:1188.4px;top:711.3px;line-height:18px">Load cases</div>
<div class="tr" style="left:1188.4px;top:739.6px;line-height:18px">LE1</div>
<div class="tr" style="left:1188.4px;top:767.8px;line-height:18px">Self weight</div>
<div class="trb" style="left:1188.4px;top:795.5px;line-height:18px">ULS Combinations</div>
<div class="tr" style="left:1216px;top:826.3px;line-height:18px">LE1</div>
<div class="trb" style="left:1162px;top:852.3px;line-height:18px">Reinforcements</div>
<div class="trb" style="left:1188.4px;top:880.3px;line-height:18px">Group of Bars</div>
<div class="tr" style="left:1216px;top:910.3px;line-height:18px;color:#fff">GB3D1</div>
<div class="a" style="left:815px;top:417.5px;width:287px;height:315px;background:#fff;border:1px solid #b8b8b8"></div>
<div class="a" style="left:816px;top:418.5px;width:285px;height:38px;background:#a6a6a6"></div>
<div class="a" style="left:827px;top:426px;font-size:19px;line-height:24px;color:#ececec">Select reinforcement type</div>
<svg class="a" style="left:1060px;top:425px" width="30" height="28"><path d="M7,7 L20,20 M20,7 L7,20" stroke="#e4e4e4" stroke-width="1.2"/></svg>
<div class="a" style="left:826.8px;top:479.7px;width:263.7px;height:200.3px;border:1.3px solid #1a1a1a;border-radius:4px"></div>
<div class="a" style="left:833px;top:468px;padding:0 4px;background:#fff;font-size:17px;line-height:22px;font-weight:bold;color:#000">Model</div>
<div class="a" style="left:845.6px;top:503.4px;width:139px;height:138.5px;background:#fafafa"></div>
<svg class="a" style="left:840px;top:500px" width="180" height="150">
 <g stroke="#f4a070" stroke-width="2.3" fill="none">
  <path d="M22,42 H128 V21"/>
  <path d="M22,82 L128,66"/>
  <path d="M22,105.5 H128"/>
 </g>
 <rect x="9" y="11" width="131" height="128" rx="7" fill="none" stroke="#f0262e" stroke-width="4.2"/>
</svg>
<div class="a" style="left:993px;top:550px;font-size:35px;line-height:36px;font-weight:bold;color:#fa3034">2</div>
<div class="a" style="left:845.5px;top:656px;font-size:15px;line-height:18px;color:#1e1e1e">Group of bars 3D</div>
<div class="a" style="left:997px;top:694.5px;width:95px;height:28.5px;background:#9b9b9b;border:1px solid #b0b0b0"></div>
<div class="a" style="left:997px;top:699.5px;width:95px;text-align:center;font-size:15.5px;line-height:18px;color:#f0f0f0">Cancel</div>
<div id="rp"></div>
<div id="split"></div>
<div class="a" style="left:1351px;top:207px;width:564px;height:31px;background:#f27022"></div>
<div class="a" style="left:1363.5px;top:215.3px;font-size:15px;line-height:18px;font-weight:bold;color:#fff">GB3D1</div>
<div class="a" style="left:1736px;top:215.8px;font-size:15px;line-height:18px;font-weight:bold;color:#fff">New</div>
<div class="a" style="left:1794.5px;top:215.8px;font-size:15px;line-height:18px;font-weight:bold;color:#fff">Copy</div>
<div class="a" style="left:1855px;top:215.8px;font-size:15px;line-height:18px;font-weight:bold;color:#fff">Delete</div>
<div class="a" style="left:1899px;top:254px;width:10px;height:606px;background:#d2d2d2"></div>
<div class="a" style="left:1395.5px;top:257.8px;font-size:15px;line-height:18px;font-weight:bold;color:#3a3a3a">Rebar properties</div>
<div class="a" style="left:1395.5px;top:424.8px;font-size:15px;line-height:18px;font-weight:bold;color:#3a3a3a">Shape definition</div>
<div class="a" style="left:1395.5px;top:594.8px;font-size:15px;line-height:18px;font-weight:bold;color:#3a3a3a">Surface component data</div>
<div class="a" style="left:1395.5px;top:821.8px;font-size:15px;line-height:18px;font-weight:bold;color:#3a3a3a">Shape position</div>
<div class="a" style="left:1395.5px;top:288.8px;font-size:15px;line-height:18px;color:#4e4e4e">Diameter [mm]</div>
<div class="a" style="left:1395.5px;top:318.8px;font-size:15px;line-height:18px;color:#4e4e4e">Material</div>
<div class="a" style="left:1395.5px;top:349.8px;font-size:15px;line-height:18px;color:#4e4e4e">Anchorage type at the beginning</div>
<div class="a" style="left:1395.5px;top:379.8px;font-size:15px;line-height:18px;color:#4e4e4e">Anchorage type at the end</div>
<div class="a" style="left:1395.5px;top:455.8px;font-size:15px;line-height:18px;color:#4e4e4e">Definition of bar shape</div>
<div class="a" style="left:1395.5px;top:487.0px;font-size:15px;line-height:18px;color:#4e4e4e">Surface cover [mm]</div>
<div class="a" style="left:1395.5px;top:518.4px;font-size:15px;line-height:18px;color:#4e4e4e">Number of layers</div>
<div class="a" style="left:1395.5px;top:549.6px;font-size:15px;line-height:18px;color:#4e4e4e">Distance of layers [mm]</div>
<div class="a" style="left:1395.5px;top:625.4px;font-size:15px;line-height:18px;color:#4e4e4e">Master</div>
<div class="a" style="left:1395.5px;top:656.2px;font-size:15px;line-height:18px;color:#4e4e4e">Surface</div>
<div class="a" style="left:1395.5px;top:686.8px;font-size:15px;line-height:18px;color:#4e4e4e">Edges</div>
<div class="a" style="left:1395.5px;top:716.8px;font-size:15px;line-height:18px;color:#4e4e4e">First edge</div>
<div class="a" style="left:1395.5px;top:746.8px;font-size:15px;line-height:18px;color:#4e4e4e">Last edge</div>
<div class="a" style="left:1395.5px;top:777.3px;font-size:15px;line-height:18px;color:#4e4e4e">Mandrel diameter</div>
<div class="a" style="left:1395.5px;top:853.5px;font-size:15px;line-height:18px;color:#4e4e4e">Edge cover type</div>
<div class="a" style="left:1630px;top:284px;width:267.4px;height:24.4px;border:1px solid #dcdcdc;background:#fff"></div>
<div class="a" style="left:1636px;top:288.0px;font-size:15px;line-height:18px;color:#1e1e1e">10.00</div>
<div class="a" style="left:1630px;top:314.6px;width:237.5px;height:23.9px;border:1px solid #dcdcdc;background:#fff"></div>
<div class="a" style="left:1638px;top:318.4px;font-size:15px;line-height:18px;color:#1e1e1e">B 500B</div>
<div class="a" style="left:1630.6px;top:451.7px;width:266.8px;height:23.9px;border:1px solid #dcdcdc;background:#fff"></div>
<div class="a" style="left:1638.1px;top:455.4px;font-size:15px;line-height:18px;color:#1e1e1e">On more edges of selected surface</div>
<div class="a" style="left:1630px;top:482.5px;width:267.4px;height:24.2px;border:1px solid #dcdcdc;background:#fff"></div>
<div class="a" style="left:1636px;top:486.4px;font-size:15px;line-height:18px;color:#1e1e1e">60.00</div>
<div class="a" style="left:1630px;top:514.2px;width:267.4px;height:24.2px;border:1px solid #dcdcdc;background:#fff"></div>
<div class="a" style="left:1636px;top:518.1px;font-size:15px;line-height:18px;color:#1e1e1e">7</div>
<div class="a" style="left:1630px;top:546px;width:267.4px;height:23.5px;border:1px solid #dcdcdc;background:#fff"></div>
<div class="a" style="left:1636px;top:549.6px;font-size:15px;line-height:18px;color:#1e1e1e">150.00</div>
<div class="a" style="left:1630px;top:621px;width:267.4px;height:24.0px;border:1px solid #dcdcdc;background:#fff"></div>
<div class="a" style="left:1638px;top:624.8px;font-size:15px;line-height:18px;color:#1e1e1e">CB 1</div>
<div class="a" style="left:1630px;top:651.7px;width:267.4px;height:23.6px;border:1px solid #dcdcdc;background:#fff"></div>
<div class="a" style="left:1638px;top:655.3px;font-size:15px;line-height:18px;color:#1e1e1e">1</div>
<div class="a" style="left:1630px;top:682px;width:267.4px;height:23.5px;border:1px solid #dcdcdc;background:#fff"></div>
<div class="a" style="left:1636px;top:685.6px;font-size:15px;line-height:18px;color:#1e1e1e">1 2 3 4</div>
<div class="a" style="left:1630px;top:772.6px;width:216.6px;height:23.5px;border:1px solid #dcdcdc;background:#eeeeee"></div>
<div class="a" style="left:1636px;top:776.2px;font-size:15px;line-height:18px;color:#a8a8a8">4.00</div>
<div class="a" style="left:1630px;top:848.7px;width:267.4px;height:24.2px;border:1px solid #dcdcdc;background:#fff"></div>
<div class="a" style="left:1638px;top:852.6px;font-size:15px;line-height:18px;color:#1e1e1e">From Settings</div>
<div class="a" style="left:1658px;top:344.4px;width:28px;height:24.3px;background:#d4d4d4"></div>
<div class="a" style="left:1658px;top:374.3px;width:28px;height:25px;background:#d4d4d4"></div>
<div class="a" style="left:1630px;top:717.3px;width:15px;height:14.5px;border:1px solid #dedede;background:#fff"></div>
<div class="a" style="left:1630px;top:747.8px;width:15px;height:14.5px;border:1px solid #dedede;background:#fff"></div>
<div class="a" style="left:1580px;top:244px;font-size:33px;line-height:34px;font-weight:bold;color:#fa3034">3</div>
<div class="a" style="left:1368.7px;top:889px;width:539px;height:2px;background:#d6d6d6"></div>
<svg class="a" style="left:1351px;top:207px" width="564" height="901"><g fill="none" stroke-width="1.4">
<path d="M22.5,56.0 L27.5,61.0 L32.5,56.0" stroke="#f27022"/>
<path d="M22.5,223.0 L27.5,228.0 L32.5,223.0" stroke="#f27022"/>
<path d="M22.5,393.0 L27.5,398.0 L32.5,393.0" stroke="#f27022"/>
<path d="M22.5,620.0 L27.5,625.0 L32.5,620.0" stroke="#f27022"/>
<path d="M500.5,117.0 L505.5,122.0 L510.5,117.0" stroke="#333" stroke-width="1.3"/>
<path d="M530,254.1 L535,259.1 L540,254.1" stroke="#333" stroke-width="1.3"/>
<path d="M530,423.5 L535,428.5 L540,423.5" stroke="#333" stroke-width="1.3"/>
<path d="M530,454.0 L535,459.0 L540,454.0" stroke="#333" stroke-width="1.3"/>
<path d="M530,651.3 L535,656.3 L540,651.3" stroke="#333" stroke-width="1.3"/>
<path d="M530,293 L535,288 L540,293 M530,299 L535,304 L540,299" stroke="#333" stroke-width="1.3" transform="translate(0,-207)"/>
<path d="M534,113 V126 M527.5,119.5 H540.5" stroke="#222" stroke-width="1.4"/>
<text x="502" y="584" font-family="Liberation Sans" font-size="14" fill="#333" stroke="none">&#934;</text>
<path d="M525.5,588 L527,581.5 L540,568.5 L544.5,573 L531.5,586 Z M537.5,571 L542,575.5" stroke="#333" stroke-width="1.5"/>
<rect x="272.2" y="55.2" width="285.2" height="617.6" rx="7" stroke="#f0262e" stroke-width="4.5"/>
</g>
<g stroke="#111" stroke-width="2.5" fill="none"><path d="M283,154.5 H303"/><path d="M311.5,145.0 V149.5 Q311.5,154.5 317,154.5 H331.3"/><path d="M345.5,145.5 L340.8,151.0 Q338.5,154.5 343,154.5 H360"/><path d="M388,146.0 H373.5 Q368.8,146.0 368.8,150.25 Q368.8,154.5 373.5,154.5 H388"/><path d="M396,154.5 H416"/><path d="M425,149.5 H433"/><path d="M452.7,149.5 H463"/></g><circle cx="409" cy="150.0" r="2.6" fill="#111"/><path d="M431,146.5 L441.5,141.5 V157.5 L431,152.5 Z" fill="#111"/><rect x="464.5" y="143.5" width="8" height="12.5" fill="#cfcfcf" stroke="#111" stroke-width="1.7"/>
<g stroke="#111" stroke-width="2.5" fill="none"><path d="M283,185 H303"/><path d="M311.5,175.5 V180 Q311.5,185 317,185 H331.3"/><path d="M345.5,176 L340.8,181.5 Q338.5,185 343,185 H360"/><path d="M388,176.5 H373.5 Q368.8,176.5 368.8,180.75 Q368.8,185 373.5,185 H388"/><path d="M396,185 H416"/><path d="M425,180 H433"/><path d="M452.7,180 H463"/></g><circle cx="409" cy="180.5" r="2.6" fill="#111"/><path d="M431,177 L441.5,172 V188 L431,183 Z" fill="#111"/><rect x="464.5" y="174" width="8" height="12.5" fill="#cfcfcf" stroke="#111" stroke-width="1.7"/>
<g transform="translate(-1351,-207)" font-family="Liberation Sans" font-size="13" fill="#222">
<g fill="none" stroke-width="1">
<path d="M1514.6,973 V907.2 H1758.4 V973" stroke="#333"/>
<path d="M1514.6,973 H1758.4" stroke="#aaa" stroke-width="1.2"/>
<circle cx="1514.6" cy="907.2" r="2" fill="#fff" stroke="#666" stroke-width="0.8"/>
<circle cx="1638" cy="907.2" r="2" fill="#fff" stroke="#666" stroke-width="0.8"/>
<circle cx="1758.4" cy="907.2" r="2" fill="#fff" stroke="#666" stroke-width="0.8"/>
<circle cx="1514.6" cy="940.4" r="2" fill="#fff" stroke="#666" stroke-width="0.8"/>
<circle cx="1638" cy="940.4" r="2" fill="#fff" stroke="#666" stroke-width="0.8"/>
<circle cx="1758.4" cy="940.4" r="2" fill="#fff" stroke="#666" stroke-width="0.8"/>
<circle cx="1638" cy="973" r="2" fill="#fff" stroke="#666" stroke-width="0.8"/>
<path d="M1562.5,955.7 L1723.5,930.8" stroke="#f39a66" stroke-width="2.6"/>
<path d="M1548,955 V973 M1543,955 H1560 M1514.6,980 V996 M1561,980 V996 M1514.6,993 H1561 M1722,980 V996 M1758.4,980 V996 M1722,993 H1758.4 M1736,930.5 V973 M1727,930.5 H1745" stroke="#777" stroke-width="0.8"/>
<path d="M1623.4,1030 V1005.4 H1514.6 V1071.2 H1623.4 V1047" stroke="#333"/>
<path d="M1623.4,1030 L1616,1041 L1630,1037 L1623.4,1047" stroke="#333"/>
<path d="M1649.7,1030 V1005.4 H1758.4 V1071.2 H1649.7 V1047" stroke="#333"/>
<path d="M1649.7,1030 L1643,1041 L1657,1037 L1649.7,1047" stroke="#333"/>
<path d="M1555,1056.7 H1611.6 V1018" stroke="#f39a66" stroke-width="2.6"/>
<path d="M1650,1055.2 H1742.7" stroke="#f39a66" stroke-width="2.6"/>
<path d="M1692,1076 H1717 M1711,1072.5 L1717.5,1076 L1711,1079.5" stroke="#f39a66" stroke-width="1.2"/>
<path d="M1535,1055 V1071 M1530,1055 H1546 M1514.6,1078 V1092 M1555,1078 V1092 M1514.6,1088 H1555 M1725,1055 V1071 M1720,1089 H1758.4 M1734,1078 V1092 M1758.4,1078 V1092" stroke="#777" stroke-width="0.8"/>
</g>
<circle cx="1514.6" cy="973" r="2.3" fill="#f39a66"/><circle cx="1758.4" cy="973" r="2.3" fill="#f39a66"/><circle cx="1514.6" cy="1071.2" r="2.3" fill="#f39a66"/>
<text x="1503" y="918" fill="#222">4</text>
<text x="1637" y="921" fill="#222">7</text>
<text x="1764" y="919" fill="#222">3</text>
<text x="1503" y="955" fill="#222">8</text>
<text x="1764" y="954" fill="#222">6</text>
<text x="1640" y="952" fill="#222">0=9</text>
<text x="1503" y="986" fill="#f39a66">1</text>
<text x="1637" y="988" fill="#222">5</text>
<text x="1765" y="986" fill="#f39a66">2</text>
<text x="1701" y="1002" fill="#222">T</text>
<text x="1503" y="1019" fill="#222">4</text>
<text x="1503" y="1053" fill="#222">8</text>
<text x="1503" y="1084" fill="#f39a66">1</text>
<text x="1764" y="1044" fill="#222">R</text>
<text x="1713" y="1067" fill="#222">c</text>
<text x="1729" y="1088" fill="#222">c</text>
<text x="1700" y="1091" fill="#f39a66">B</text>
<text x="1533" y="968">Z<tspan font-size="8" dy="3">1</tspan></text>
<text x="1531" y="990">X<tspan font-size="8" dy="3">1</tspan></text>
<text x="1739" y="957">Z<tspan font-size="8" dy="3">2</tspan></text>
<text x="1734" y="990">X<tspan font-size="8" dy="3">2</tspan></text>
<text x="1519" y="1068">Z<tspan font-size="8" dy="3">1</tspan></text>
<text x="1527" y="1087">X<tspan font-size="8" dy="3">1</tspan></text>
</g>
</svg>
<div id="status">
  <div class="a" style="left:1px;top:12.3px;font-size:15px;line-height:18px;color:#e4e4e4">Design Code:<b style="color:#fff;margin-left:1.5px">EN</b></div>
  <div class="a" style="left:133px;top:12.3px;font-size:15px;line-height:18px;color:#e4e4e4;letter-spacing:-0.1px">Rounding:<b style="color:#fff;margin-left:2px">Metric</b></div>
  <div class="a" style="left:267px;top:12.3px;font-size:15px;line-height:18px;color:#e4e4e4;letter-spacing:-0.1px">Presentation Units:<b style="color:#fff;margin-left:2px">Metric</b></div>
</div>
</body></html>
